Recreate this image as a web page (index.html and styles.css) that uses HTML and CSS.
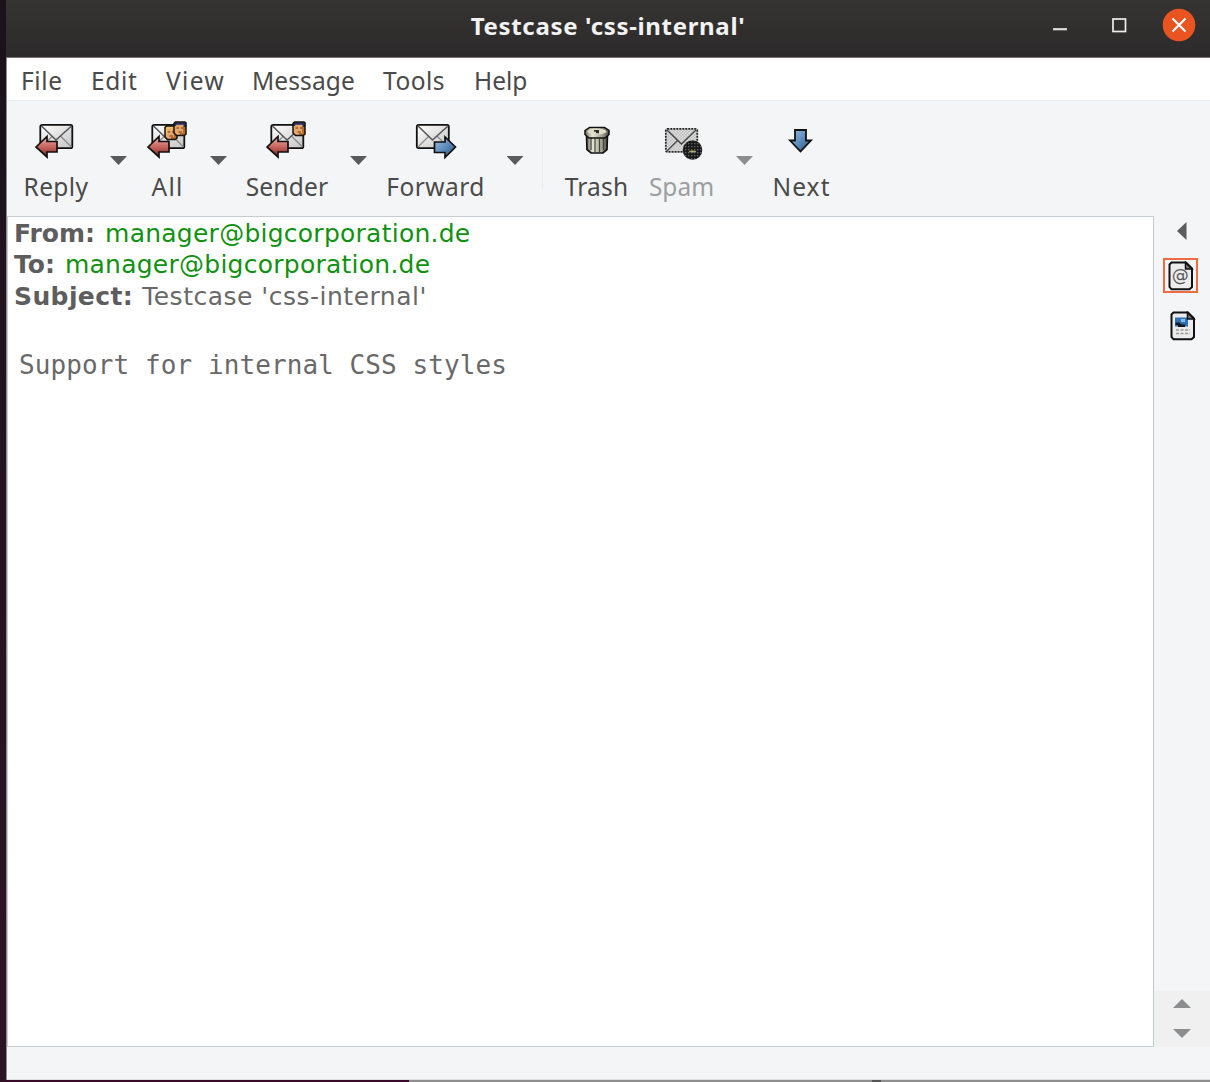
FILE: index.html
```html
<!DOCTYPE html>
<html lang="en">
<head>
<meta charset="utf-8">
<title>Testcase 'css-internal'</title>
<link rel="stylesheet" href="styles.css">
</head>
<body>
<svg class="defs" width="0" height="0" aria-hidden="true">
  <defs>
    <linearGradient id="paper" x1="0" y1="0" x2="1" y2="1"><stop offset="0" stop-color="#fff"/><stop offset="1" stop-color="#c4c4c4"/></linearGradient>
    <linearGradient id="red" x1="0" y1="0" x2="0" y2="1"><stop offset="0" stop-color="#f0b0a8"/><stop offset=".5" stop-color="#c8655e"/><stop offset="1" stop-color="#7c2520"/></linearGradient>
    <linearGradient id="blue" x1="0" y1="0" x2="1" y2="1"><stop offset="0" stop-color="#9cc0e4"/><stop offset=".55" stop-color="#5888b8"/><stop offset="1" stop-color="#28486c"/></linearGradient>
    <linearGradient id="can" x1="0" y1="0" x2="1" y2="0"><stop offset="0" stop-color="#6c6c5c"/><stop offset=".3" stop-color="#e6e6d6"/><stop offset=".7" stop-color="#a4a494"/><stop offset="1" stop-color="#4c4c3e"/></linearGradient>
    <pattern id="dots" width="3" height="3" patternUnits="userSpaceOnUse"><rect width="3" height="3" fill="#e4e4e4"/><rect width="1.5" height="1.5" fill="#b8b8b8"/><rect x="1.5" y="1.5" width="1.5" height="1.5" fill="#b8b8b8"/></pattern>
    <pattern id="darkdots" width="3" height="3" patternUnits="userSpaceOnUse"><rect width="3" height="3" fill="#191919"/><rect width="1.3" height="1.3" fill="#666"/></pattern>
    <g id="envelope">
      <rect x=".8" y=".8" width="32" height="23.4" rx="1.8" fill="url(#paper)" stroke="#111" stroke-width="1.8"/>
      <path d="M2 23 13 12M32 23 21 12" stroke="#888" stroke-width="1.1" fill="none"/>
      <path d="M2 2 16.5 16 32 2" stroke="#555" stroke-width="1.5" fill="none"/>
    </g>
    <path id="left" d="M1 19 12 8.5V13.5H22V24H12V29Z" transform="translate(0 5)" fill="url(#red)" stroke="#111" stroke-width="1.7"/>
    <g id="head">
      <path d="M1 3 2.5 1H12L13 2V13L11 14.500H3.500L1 12Z" fill="#e8a768"/>
      <path d="M10 4h3v8l-2.500 2.500H7V12h3Z" fill="#b56b2e"/>
      <path d="M3.500 7h2.500M8 7h2M5.500 11h3.500" stroke="#6b3a16" stroke-width="1.200"/>
    </g>
    <path id="outline" d="M1 2.500 2.500 1H12L13 2V13L11 14.500H3.500L1 12Z" fill="none" stroke="#15120f" stroke-width="1.500"/>
    <g id="dark-hair"><use href="#head"/><path d="M2 5V2.500H12V6" fill="none" stroke="#252c68" stroke-width="2.400"/><use href="#outline"/></g>
    <g id="fair-hair"><use href="#head"/><path d="M2 9V2.500H12" fill="none" stroke="#efc368" stroke-width="2.600"/><use href="#outline"/></g>
  </defs>
</svg>
<div class="desktop">
<div class="window">
  <header class="titlebar">
    <h1 class="title">Testcase 'css-internal'</h1>
    <div class="controls">
      <svg width="16" height="18" viewBox="0 0 16 18"><path d="M1 13.2H15" stroke="#ddd" stroke-width="2.2"/></svg>
      <svg width="16" height="16" viewBox="0 0 16 16"><rect x="2" y="2" width="12.5" height="12.5" fill="none" stroke="#eee" stroke-width="1.7"/></svg>
      <svg width="34" height="34" viewBox="0 0 34 34"><circle cx="17" cy="17" r="16.3" fill="#e95420"/><path d="M10.5 10.5 23.5 23.5M23.5 10.5 10.5 23.5" stroke="#fff" stroke-width="2.2"/></svg>
    </div>
  </header>
  <nav class="menu">
    <span class="file">File</span><span class="edit">Edit</span><span class="view">View</span><span class="message">Message</span><span class="tools">Tools</span><span class="help">Help</span>
  </nav>
  <div class="toolbar">
    <div class="tool">
      <svg width="42" height="42" viewBox="0 0 42 42"><use href="#envelope" x="4.500" y="5"/><use href="#left" y="4"/></svg>
      <span class="reply">Reply</span>
    </div>
    <i class="caret"></i>
    <div class="tool">
      <svg width="41" height="42" viewBox="0 0 41 42"><use href="#envelope" x="4.500" y="5"/><use href="#left" y="4"/><use href="#fair-hair" x="17" y="6"/><use href="#dark-hair" x="26" y="2"/></svg>
      <span class="all">All</span>
    </div>
    <i class="caret"></i>
    <div class="tool">
      <svg width="42" height="42" viewBox="0 0 42 42"><use href="#envelope" x="4.500" y="5"/><use href="#left" y="4"/><use href="#dark-hair" x="26" y="2"/></svg>
      <span class="sender">Sender</span>
    </div>
    <i class="caret"></i>
    <div class="tool">
      <svg width="42" height="42" viewBox="0 0 42 42"><use href="#envelope" x="1" y="5"/><path d="M40.500 28 30 18V23H19.500V33.500H30V38.500Z" fill="url(#blue)" stroke="#111" stroke-width="1.7"/></svg>
      <span class="forward">Forward</span>
    </div>
    <i class="caret"></i>
    <i class="separator"></i>
    <div class="tool">
      <svg width="42" height="42" viewBox="0 0 42 42"><path d="M10.500 15 11 30.500 15 34H27L31 30.500 31.500 15Z" fill="url(#can)" stroke="#111" stroke-width="1.7"/><path d="M15 19V31M19 20V33M23.500 20V33M27.500 19V31" stroke="#44443a" stroke-width="1.200"/><path d="M9 11.500 13.500 8.500H28.500L33 11.500V15.500L29 19H13L9 15.500Z" fill="url(#can)" stroke="#111" stroke-width="1.5"/><ellipse cx="21" cy="12.500" rx="9.500" ry="3" fill="#deddca"/><path d="M18 11.800H23M20 13.300h3" stroke="#302f26" stroke-width="1.700"/></svg>
      <span class="trash">Trash</span>
    </div>
    <div class="tool disabled">
      <svg width="42" height="42" viewBox="0 0 42 42"><rect x="4.800" y="9.800" width="31.500" height="23" rx="1.500" fill="url(#dots)" stroke="#222" stroke-width="1.700" stroke-dasharray="2 1"/><path d="M6 11 20.500 25 35 11M6 32 17 21" fill="none" stroke="#444" stroke-width="1.300"/><circle cx="31.500" cy="31" r="9.800" fill="url(#darkdots)"/><path d="M28 32.500h7" stroke="#999" stroke-width="1.500"/><path d="M30.500 32.500h2" stroke="#d9c322" stroke-width="1.700"/></svg>
      <span class="spam">Spam</span>
    </div>
    <i class="caret muted"></i>
    <div class="tool">
      <svg width="42" height="42" viewBox="0 0 42 42"><path d="M14 11H25V21.500H30L19.500 32.500 9 21.500H14Z" fill="url(#blue)" stroke="#111" stroke-width="1.800"/></svg>
      <span class="next">Next</span>
    </div>
  </div>
  <div class="content">
    <main class="mail">
      <p class="line"><b>From:</b><a class="address">manager@bigcorporation.de</a></p>
      <p class="line"><b>To:</b><a class="address">manager@bigcorporation.de</a></p>
      <p class="line"><b class="label">Subject:</b><span class="subject">Testcase 'css-internal'</span></p>
      <pre class="body">Support for internal CSS styles</pre>
    </main>
    <aside class="side">
      <svg width="10" height="18" viewBox="0 0 10 18"><path d="M9.500 0V18L0 9Z" fill="#5c5c5c"/></svg>
      <div class="part selected">
        <svg width="26" height="30" viewBox="0 0 26 30"><path d="M3.500 1.500H18L24 7.500V26L21.500 28.300H3.500L1.500 26V3.500Z" fill="#ececec" stroke="#111" stroke-width="2"/><path d="M17.500 1.500V8H24Z" fill="#777" stroke="#111" stroke-width="1.500"/><text x="12.200" y="20" text-anchor="middle" class="at">@</text></svg>
      </div>
      <div class="part">
        <svg width="26" height="30" viewBox="0 0 26 30"><path d="M3.500 1.500H18L24 7.500V26L21.500 28.300H3.500L1.500 26V3.500Z" fill="#ececec" stroke="#111" stroke-width="2"/><path d="M5 6.500H18V15.500H5Z" fill="#2d70b5"/><path d="M5.500 11.500H9L12 13.500H15V16H8V14H5.500Z" fill="#101820"/><path d="M11 8h4v3h-4Z" fill="#8bbbe5"/><path d="M17.500 1.500V8H24Z" fill="#777" stroke="#111" stroke-width="1.500"/><path d="M6 19H20M6 22.500H20" stroke="#999" stroke-width="1.300" stroke-dasharray="3 1.500"/></svg>
      </div>
      <div class="stepper">
        <svg width="18" height="9" viewBox="0 0 18 9"><path d="M0 9H18L9 0Z" fill="#8b8d8e"/></svg>
        <svg width="18" height="9" viewBox="0 0 18 9"><path d="M0 0H18L9 9Z" fill="#8b8d8e"/></svg>
      </div>
    </aside>
  </div>
  <footer class="status"></footer>
</div>
<div class="below"></div>
</div>
</body>
</html>
```
FILE: styles.css
```css
* { box-sizing: border-box; }
body { margin: 0; overflow: hidden; font-family: "Noto Sans", sans-serif; color: #4a4a4a; }
.defs { display: block; }
.desktop { width: 1210px; height: 1082px; padding-left: 6px; background: linear-gradient(#1c121b, #22141f 40%, #2d1424); }
.window { height: 1080px; display: flex; flex-direction: column; border-left: 1px solid #8f8b90; background: #f4f5f7; }
.titlebar { height: 58px; margin-left: -1px; flex: none; position: relative; display: flex; justify-content: center; background: linear-gradient(#353431, #2c2a2b); border-bottom: 1px solid #777473; }
.title { margin: 0; font-size: 24px; line-height: 51px; font-weight: 700; color: #f2f2f2; letter-spacing: .67px; white-space: nowrap; }
.controls { position: absolute; right: 14px; top: 8px; display: flex; align-items: center; gap: 43px; }
.controls svg:nth-child(2) { margin-right: -8px; }
.menu { height: 43px; flex: none; display: grid; grid-template-columns: 70px 75px 86px 131px 91px 80px; padding-left: 14px; background: #fff; border-bottom: 1px solid #ebedef; font-size: 24.5px; line-height: 45px; white-space: nowrap; }
.file { letter-spacing: .6px; }
.edit { letter-spacing: .7px; }
.view { letter-spacing: 1.4px; }
.message { letter-spacing: .1px; }
.tools { letter-spacing: .5px; }
.toolbar { height: 115px; flex: none; display: grid; align-items: start; grid-template-columns: 84px 41px 57px 45px 92px 51px 103px 56px 12px 83px 87px 39px 75px; padding: 18px 0 0 7px; }
.tool { display: flex; flex-direction: column; align-items: center; font-size: 24.5px; line-height: 34px; white-space: nowrap; }
.tool svg { margin-bottom: 9px; }
.reply { letter-spacing: .4px; }
.all { letter-spacing: 1.2px; }
.sender { letter-spacing: .2px; }
.forward { letter-spacing: .45px; }
.trash { letter-spacing: .2px; }
.next { letter-spacing: 1.1px; }
.disabled { color: #9c9ea0; }
.caret { width: 17px; height: 9px; margin: 37px auto 0; background: #5a5a5a; clip-path: polygon(0 0, 100% 0, 50% 100%); }
.muted { background: #8b8d8e; }
.separator { width: 1px; height: 61px; margin: 9px 0 0 -1px; background: #e9ebed; }
.content { height: 831px; flex: none; display: flex; }
.mail { width: 1147px; border: 1px solid #c5cbd0; background: #fff; padding: 2px 0 0 6px; color: #696969; font-family: "DejaVu Sans", sans-serif; font-size: 25px; }
.line { margin: 0; height: 31.4px; line-height: 30px; display: flex; gap: 10px; white-space: nowrap; }
.line b { color: #5d5d5d; }
.label { letter-spacing: .4px; }
.label + .subject { margin-left: -1px; }
.address { color: #119111; letter-spacing: .25px; }
.subject { letter-spacing: .5px; }
.body { margin: 36px 0 0 5px; font: 26px/32px "DejaVu Sans Mono", monospace; letter-spacing: .09px; }
.side { flex: 1; display: flex; flex-direction: column; align-items: center; padding-top: 6px; }
.part { width: 35px; height: 35px; margin: 18px 0 0 -3px; display: grid; place-items: center; }
.part + .part { margin-top: 15px; margin-left: 1px; }
.selected { border: 2px solid #ee6b43; }
.selected svg { margin: 1px 0 0 1px; }
.at { font: 17px "DejaVu Sans", sans-serif; fill: #555; }
.stepper { width: 100%; height: 56px; margin-top: auto; padding-top: 8px; background: #f0f0f0; display: flex; flex-direction: column; align-items: center; gap: 21px; }
.status { flex: 1; border-bottom: 1px solid #dedede; }
.below { height: 2px; background: linear-gradient(90deg, #3a0b29 0 403px, #8e8e8e 403px 866px, #555 866px 875px, #8e8e8e 875px); }
```
